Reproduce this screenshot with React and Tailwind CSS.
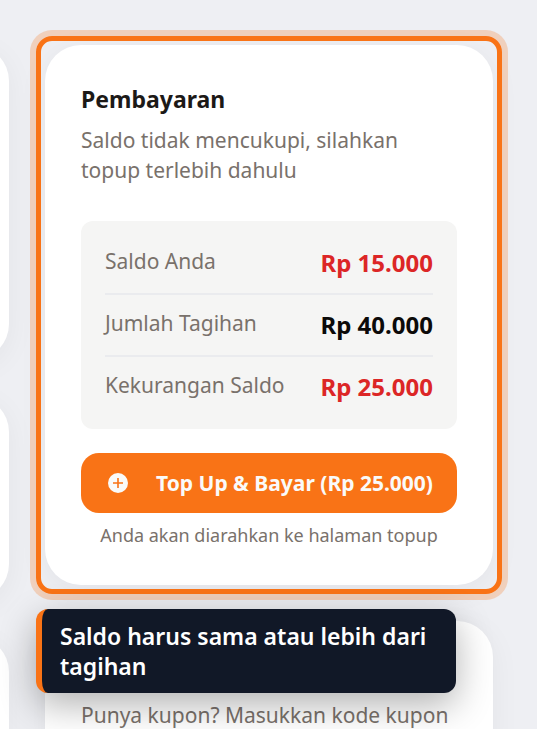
import React from 'react';

const rows = [
  { label: 'Saldo Anda', amount: 'Rp 15.000', color: 'text-[#dc2626]' },
  { label: 'Jumlah Tagihan', amount: 'Rp 40.000', color: 'text-stone-950' },
  { label: 'Kekurangan Saldo', amount: 'Rp 25.000', color: 'text-[#dc2626]' },
];

function PlusCircleIcon() {
  return (
    <svg width="26" height="24" viewBox="-1 0 26 24" aria-hidden="true">
      <circle cx="12" cy="12" r="10" fill="#fafaf9" />
      <path d="M12 7v10M7 12h10" stroke="#f97316" strokeWidth="1.6" fill="none" />
    </svg>
  );
}

function Card({ className, children }) {
  return (
    <section className={`bg-white rounded-[36px] shadow-[0_6px_30px_rgba(15,23,42,0.05)] ${className}`}>
      {children}
    </section>
  );
}

function TourHighlight({ children }) {
  return (
    <div className="absolute -inset-[9px] z-10 pointer-events-none rounded-[16px] border-[5px] border-[#f97316] shadow-[0_0_0_6px_rgba(249,115,22,0.25)]">
      <div
        role="tooltip"
        className="absolute top-full -left-[5px] mt-5 w-[420px] max-w-full rounded-xl border-l-[6px] border-[#f97316] bg-[#111827] px-[18px] py-3 text-[23px] leading-[30px] font-semibold text-white shadow-[0_12px_36px_rgba(0,0,0,0.3)]"
      >
        {children}
      </div>
    </div>
  );
}

function PaymentCard() {
  return (
    <Card className="p-9">
      <h2 className="text-[23px] leading-9 font-bold text-stone-900">Pembayaran</h2>
      <p className="mt-2 text-[21px] leading-[30px] text-stone-500">
        Saldo tidak mencukupi, silahkan topup terlebih dahulu
      </p>

      {/* Summary */}
      <dl className="mt-9 rounded-xl bg-stone-100 px-6 py-3">
        {rows.map((row) => (
          <div
            key={row.label}
            className="flex items-start justify-between border-b-2 border-[#e5e7eb]/70 py-3 last:border-b-0"
          >
            <dt className="text-[21px] leading-8 text-stone-500">{row.label}</dt>
            <dd className={`text-2xl leading-9 font-bold ${row.color}`}>{row.amount}</dd>
          </div>
        ))}
      </dl>

      <button
        type="button"
        className="mt-6 flex h-15 w-full items-center justify-between rounded-[18px] bg-[#f97316] px-6 text-[21px] leading-[30px] font-bold text-stone-50"
      >
        <PlusCircleIcon />
        <span>Top Up &amp; Bayar (Rp 25.000)</span>
      </button>
      <p className="mt-[9px] text-center text-lg leading-[27px] text-stone-500">
        Anda akan diarahkan ke halaman topup
      </p>
    </Card>
  );
}

function App() {
  return (
    <div className="flex h-screen gap-9 overflow-hidden bg-[#eeeff3] pt-[45px] pr-11 font-['Noto_Sans',sans-serif]">
      <div className="-ml-50 flex w-[209px] shrink-0 flex-col gap-9">
        <Card className="h-[315px] shrink-0" />
        <Card className="h-51 shrink-0" />
        <Card className="h-75 shrink-0" />
      </div>

      <main className="flex min-w-0 flex-1 flex-col gap-9">
        <div className="relative">
          <PaymentCard />
          <TourHighlight>Saldo harus sama atau lebih dari tagihan</TourHighlight>
        </div>
        <Card className="px-9 pt-[79px] pb-9">
          <p className="text-[21px] leading-[30px] whitespace-nowrap text-stone-500">
            Punya kupon? Masukkan kode kupon
          </p>
        </Card>
      </main>
    </div>
  );
}

export default App;
